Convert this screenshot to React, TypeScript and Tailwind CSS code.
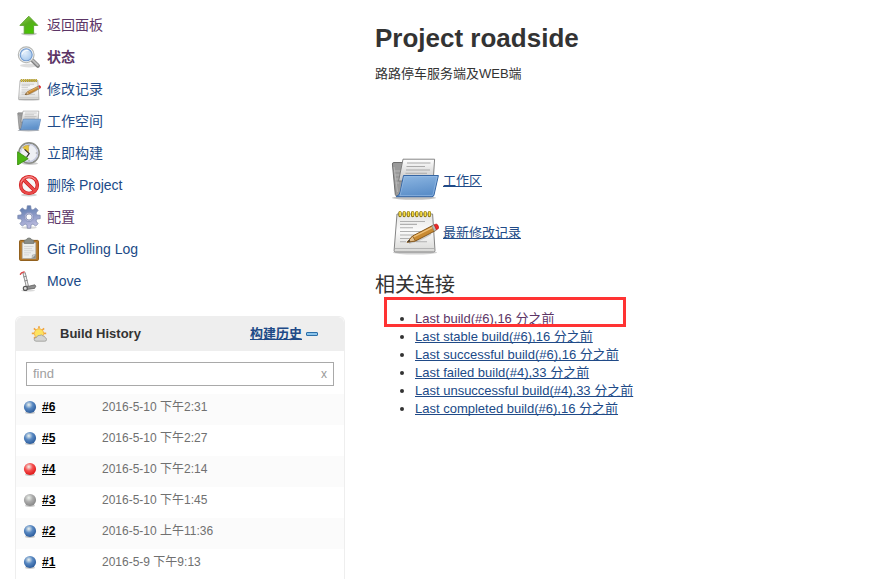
import type { ReactNode } from 'react';

const LINK = 'text-[#204a87]';
const VISITED = 'text-[#5c3566]';
const UNDERLINE = 'underline [text-decoration-skip-ink:none]';

function UpIcon() {
  return (
    <svg viewBox="0 0 24 24" className="size-6 shrink-0" aria-hidden="true">
      <defs>
        <linearGradient id="up" x1="0" y1="0" x2="0.6" y2="1">
          <stop offset="0" stopColor="#8fd04a" />
          <stop offset="0.5" stopColor="#58ac1e" />
          <stop offset="1" stopColor="#45c800" />
        </linearGradient>
      </defs>
      <ellipse cx="12" cy="20.8" rx="8" ry="1.6" fill="#000" opacity="0.22" />
      <path d="M11.8 3.2 20.8 12.4H16.6V20.6H7.2V12.4H2.9Z" fill="url(#up)" stroke="#5aa02c" strokeWidth="0.9" strokeLinejoin="round" />
    </svg>
  );
}

function SearchIcon() {
  return (
    <svg viewBox="0 0 24 24" className="size-6 shrink-0" aria-hidden="true">
      <defs>
        <radialGradient id="lens" cx="0.4" cy="0.35" r="0.7">
          <stop offset="0" stopColor="#e2eefb" />
          <stop offset="1" stopColor="#a5c7ec" />
        </radialGradient>
      </defs>
      <ellipse cx="12" cy="20.5" rx="9" ry="1.9" fill="#000" opacity="0.13" />
      <path d="M15 15 20.9 20.8" stroke="#808080" strokeWidth="4" strokeLinecap="round" />
      <path d="M15.2 14.8 20.8 20.2" stroke="#bdbdbd" strokeWidth="2" strokeLinecap="round" />
      <circle cx="9.2" cy="9.8" r="7.9" fill="#f4f4f4" stroke="#b4b6b3" strokeWidth="1.1" />
      <circle cx="9.2" cy="9.8" r="6" fill="url(#lens)" stroke="#6f99cf" strokeWidth="1.1" />
      <path d="M5.2 9.5C5.6 6.6 8.5 5 11.4 5.6" fill="none" stroke="#fff" strokeWidth="1.2" opacity="0.8" />
    </svg>
  );
}

function NotepadIcon({ className }: { className: string }) {
  return (
    <svg viewBox="0 0 48 48" className={className} aria-hidden="true">
      <defs>
        <linearGradient id="pad" x1="0" y1="0" x2="0" y2="1">
          <stop offset="0" stopColor="#e4e4e2" />
          <stop offset="0.45" stopColor="#fbfbfb" />
          <stop offset="1" stopColor="#d8d8d6" />
        </linearGradient>
      </defs>
      <ellipse cx="24" cy="45.5" rx="22" ry="2" fill="#000" opacity="0.18" />
      <path d="M6 7H41.6L44 43.5Q44 45 42.5 45H4.5Q3 45 3.1 43.5Z" fill="url(#pad)" stroke="#858585" />
      <path d="M3.6 41.5H43.5" stroke="#aaa" strokeWidth="0.8" />
      <path d="M9 14.5H34M9 17.4H26M9 20.8H22M9 24.5H32M9 28H27M9 31.5H22M9 34.8H15M25 34.8H36" stroke="#b0b0b0" strokeWidth="1.1" />
      {[9, 13.2, 17.4, 21.6, 25.8, 30, 34.2, 38.4].map((x) => (
        <g key={x}>
          <rect x={x - 1.6} y="4" width="3.2" height="6.2" rx="1.6" fill="#806a08" />
          <rect x={x - 0.8} y="4.6" width="1.8" height="4.6" rx="0.8" fill="#f5dc45" />
        </g>
      ))}
      <path d="M18 36Q28 34 40 27" fill="none" stroke="#000" strokeWidth="2" opacity="0.15" />
      <path d="M16.2 35.2 21.6 29 42 18.3 44.6 23.6 24.4 34Z" fill="#c98a32" stroke="#7c4d12" strokeWidth="0.9" strokeLinejoin="round" />
      <path d="M22 30.2 42.2 20.1" stroke="#efc077" strokeWidth="1.3" />
      <path d="M16.2 35.2 21.6 29 24.4 34Z" fill="#e4c08c" stroke="#7c4d12" strokeWidth="0.7" />
      <path d="M16.2 35.2 18.4 32.7 19.4 34.5Z" fill="#333" />
      <path d="M40.8 18.8 43.2 17.7 45.5 22.9 43.2 24.2Z" fill="#b9bdb6" stroke="#777" strokeWidth="0.5" />
      <path d="M43.2 17.7 45.3 17Q47.7 17.8 47.7 21.2L45.5 22.9Z" fill="#ef2929" stroke="#b01010" strokeWidth="0.6" />
    </svg>
  );
}

function FolderIcon({ className }: { className: string }) {
  return (
    <svg viewBox="0 0 48 48" className={className} aria-hidden="true">
      <defs>
        <linearGradient id="folder" x1="0" y1="0" x2="0.3" y2="1">
          <stop offset="0" stopColor="#8fb8e3" />
          <stop offset="1" stopColor="#5c8fc9" />
        </linearGradient>
        <linearGradient id="sheet" x1="0" y1="0" x2="0" y2="1">
          <stop offset="0" stopColor="#fff" />
          <stop offset="1" stopColor="#c4c4c4" />
        </linearGradient>
      </defs>
      <ellipse cx="23" cy="42.8" rx="22" ry="2" fill="#000" opacity="0.25" />
      <path d="M1.4 9Q1.4 7.5 3 7.5H13L38 14 40 41H6Q4.6 41 4.3 39.5Z" fill="#9a9a9a" stroke="#6e6e6e" />
      <path d="M3 12 6.5 37M3 16H9M3.7 20H9M4 24H8M4.6 28H8" stroke="#bdbdbd" strokeWidth="0.8" />
      <path d="M12 4.2H43.6L42.2 26H7.6Z" fill="url(#sheet)" stroke="#777" strokeWidth="0.9" />
      <path d="M16 8H39.5M15.5 11.5H34M15 15H39M14.5 18.3H36" stroke="#aaa" strokeWidth="1.1" />
      <path d="M12.5 20.5H47.4L43 40Q42.6 41.7 41 41.7H5.2Q8.4 40.6 9.2 37Z" fill="url(#folder)" stroke="#3566a4" strokeLinejoin="round" />
      <path d="M13.4 21.6H46L42 39.6Q41.7 40.6 40.8 40.6H9Z" fill="none" stroke="#9cc0e8" strokeWidth="0.6" />
    </svg>
  );
}

function ClockIcon() {
  return (
    <svg viewBox="0 0 24 24" className="size-6 shrink-0" aria-hidden="true">
      <ellipse cx="13" cy="22.6" rx="8" ry="1.4" fill="#000" opacity="0.2" />
      <circle cx="12" cy="12" r="10.1" fill="#eef0f4" stroke="#8b8d88" strokeWidth="1.6" />
      <circle cx="12" cy="12" r="8.6" fill="none" stroke="#c7cbe0" strokeWidth="1.3" />
      <path d="M11.5 12.5 5.8 6.5Q8.2 4.2 11.6 4.3Z" fill="#e6c33c" stroke="#b8962a" strokeWidth="0.5" />
      <path d="M7.6 8.4 12.2 12.6 9.6 16.2" fill="none" stroke="#333" strokeWidth="1.2" />
      <path d="M12 3.8V5.2M20.2 12H18.8M12 20.2V18.8" stroke="#888" strokeWidth="0.9" />
      <path d="M0.6 10.8 11.2 17.7 0.6 24Z" fill="#4cb614" stroke="#3d8f12" strokeWidth="0.9" strokeLinejoin="round" />
    </svg>
  );
}

function DeleteIcon() {
  return (
    <svg viewBox="0 0 24 24" className="size-6 shrink-0" aria-hidden="true">
      <ellipse cx="12" cy="22" rx="8" ry="1.4" fill="#000" opacity="0.18" />
      <circle cx="12" cy="12" r="8.4" fill="#f6f6f6" stroke="#cc1616" strokeWidth="3.4" />
      <path d="M6 6.1 18 18" stroke="#cc1616" strokeWidth="3.6" />
      <circle cx="12" cy="12" r="8.4" fill="none" stroke="#ea4a4a" strokeWidth="2.2" />
      <path d="M5.9 6 18.1 18.1" stroke="#ea4a4a" strokeWidth="2.3" />
      <path d="M4 9.4A8.4 8.4 0 0 1 18.6 6.9" fill="none" stroke="#f79a9a" strokeWidth="1" />
    </svg>
  );
}

function GearIcon() {
  return (
    <svg viewBox="0 0 24 24" className="size-6 shrink-0" aria-hidden="true">
      <defs>
        <linearGradient id="gear" gradientUnits="userSpaceOnUse" x1="9" y1="1" x2="14" y2="23">
          <stop offset="0" stopColor="#5e7caf" />
          <stop offset="0.5" stopColor="#8f9cc8" />
          <stop offset="1" stopColor="#c3c0e2" />
        </linearGradient>
      </defs>
      <ellipse cx="12" cy="22.6" rx="8" ry="1.3" fill="#000" opacity="0.15" />
      <path
        d="M9.9 4.2 10.3 0.8H13.7L14.1 4.2 16 5 18.7 2.9 21.1 5.3 19 8 19.8 9.9 23.2 10.3V13.7L19.8 14.1 19 16 21.1 18.7 18.7 21.1 16 19 14.1 19.8 13.7 23.2H10.3L9.9 19.8 8 19 5.3 21.1 2.9 18.7 5 16 4.2 14.1 0.8 13.7V10.3L4.2 9.9 5 8 2.9 5.3 5.3 2.9 8 5Z"
        fill="url(#gear)"
        stroke="#7482ab"
        strokeWidth="0.7"
        strokeLinejoin="round"
      />
      <circle cx="12" cy="12" r="4.6" fill="#b4b8da" stroke="#8490ba" strokeWidth="0.7" />
      <circle cx="12" cy="12" r="3" fill="#fff" stroke="#7482ab" strokeWidth="0.7" />
    </svg>
  );
}

function ClipboardIcon() {
  return (
    <svg viewBox="0 0 24 24" className="size-6 shrink-0" aria-hidden="true">
      <rect x="2.6" y="3.4" width="18.8" height="20" rx="0.8" fill="#b87c2b" stroke="#8a5710" strokeWidth="1" />
      <path d="M5.2 5.6H18.8V21.6H5.2Z" fill="#eceeec" stroke="#9b9b9b" strokeWidth="0.6" />
      <path d="M7 9.5H16.5M7 11.6H15M7 13.7H16.5M7 15.8H14M7 17.9H12" stroke="#d3d3d3" strokeWidth="0.9" />
      <path d="M18.8 17.4 15 21.6H18.8Z" fill="#8b8d88" />
      <path d="M15 21.6 15.4 18 18.8 17.4Z" fill="#d5d7d3" stroke="#8b8d88" strokeWidth="0.5" />
      <path d="M7.2 6.4V4Q7.2 3 8.2 3H9.3Q9.8 1 12 1T14.7 3H15.9Q16.8 3 16.8 4V6.4Z" fill="#8b8f89" stroke="#70736e" strokeWidth="0.8" />
    </svg>
  );
}

function MoveIcon() {
  return (
    <svg viewBox="0 0 24 24" className="size-6 shrink-0" aria-hidden="true">
      <ellipse cx="11" cy="21.6" rx="7" ry="1" fill="#000" opacity="0.15" />
      <path d="M7 3.6 10.4 17.4" stroke="#8c8c8c" strokeWidth="3.2" />
      <path d="M7.2 4.4 10.2 16.6" stroke="#f1f1f1" strokeWidth="1.4" />
      <path d="M6.4 8 9.4 7.2M7.6 12 10.6 11.2" stroke="#777" strokeWidth="0.8" />
      <path d="M3.4 5.2 4.6 3.8 7.2 2.9" fill="none" stroke="#d94a4a" strokeWidth="1.4" strokeLinecap="round" />
      <path d="M9.4 17.8 17.8 15.8 18.8 17.2 17.6 19.4 10 20.4Z" fill="#8f8f8f" stroke="#555" strokeWidth="0.7" />
      <circle cx="8.3" cy="19.4" r="2" fill="#ddd" stroke="#555" strokeWidth="1.1" />
    </svg>
  );
}

function WeatherIcon() {
  return (
    <svg viewBox="0 0 16 16" className="size-4 shrink-0" aria-hidden="true">
      <g stroke="#f0a33b" strokeWidth="1.7">
        {[0, 45, 90, 135, 180, 225, 270, 315].map((angle) => (
          <path key={angle} d="M8 0.2V2.6" transform={`rotate(${angle} 8 7.4)`} />
        ))}
      </g>
      <circle cx="8" cy="7.4" r="4.6" fill="#fde35f" stroke="#f5b548" strokeWidth="1" />
      <path d="M5 15.2Q3 15 3.2 13.2T5.6 11.4Q6.4 9 8.8 9.4 10.6 8.2 12 10 13.8 9.8 14.1 11.6 15.8 12.2 15.6 13.7T13.8 15.2Z" fill="#d3d4d2" stroke="#9a9c97" strokeWidth="0.8" />
    </svg>
  );
}

const BALLS = {
  blue: { dark: '#2f5f9e', mid: '#5888c2', label: 'Success' },
  red: { dark: '#e01b1b', mid: '#f55050', label: 'Failed' },
  grey: { dark: '#8a8a8a', mid: '#adadad', label: 'Aborted' },
};

function Ball({ color }: { color: keyof typeof BALLS }) {
  const ball = BALLS[color];
  return (
    <svg viewBox="0 0 14 14" className="size-[14px] shrink-0" role="img" aria-label={ball.label}>
      <defs>
        <radialGradient id={`ball-${color}`} cx="0.4" cy="0.32" r="0.65">
          <stop offset="0" stopColor="#eef3ee" />
          <stop offset="0.5" stopColor={ball.mid} />
          <stop offset="1" stopColor={ball.dark} />
        </radialGradient>
      </defs>
      <ellipse cx="7" cy="12.8" rx="5" ry="1.1" fill="#000" opacity="0.22" />
      <circle cx="7" cy="7" r="6.1" fill={`url(#ball-${color})`} />
    </svg>
  );
}

type Task = { label: string; icon: ReactNode; style: string };

const tasks: Task[] = [
  { label: '返回面板', icon: <UpIcon />, style: VISITED },
  { label: '状态', icon: <SearchIcon />, style: 'font-bold text-[#5c3566]' },
  { label: '修改记录', icon: <NotepadIcon className="size-6 shrink-0" />, style: LINK },
  { label: '工作空间', icon: <FolderIcon className="size-6 shrink-0" />, style: LINK },
  { label: '立即构建', icon: <ClockIcon />, style: LINK },
  { label: '删除 Project', icon: <DeleteIcon />, style: LINK },
  { label: '配置', icon: <GearIcon />, style: VISITED },
  { label: 'Git Polling Log', icon: <ClipboardIcon />, style: LINK },
  { label: 'Move', icon: <MoveIcon />, style: LINK },
];

const builds: { id: string; color: keyof typeof BALLS; date: string }[] = [
  { id: '#6', color: 'blue', date: '2016-5-10 下午2:31' },
  { id: '#5', color: 'blue', date: '2016-5-10 下午2:27' },
  { id: '#4', color: 'red', date: '2016-5-10 下午2:14' },
  { id: '#3', color: 'grey', date: '2016-5-10 下午1:45' },
  { id: '#2', color: 'blue', date: '2016-5-10 上午11:36' },
  { id: '#1', color: 'blue', date: '2016-5-9 下午9:13' },
];

const permalinks = [
  { label: 'Last build(#6),16 分之前', style: VISITED },
  { label: 'Last stable build(#6),16 分之前', style: LINK },
  { label: 'Last successful build(#6),16 分之前', style: LINK },
  { label: 'Last failed build(#4),33 分之前', style: LINK },
  { label: 'Last unsuccessful build(#4),33 分之前', style: LINK },
  { label: 'Last completed build(#6),16 分之前', style: LINK },
];

function BuildHistory() {
  return (
    <section className="mt-[19px] rounded-t-md border border-b-0 border-[#eeeeee]">
      <header className="flex h-[34px] items-center rounded-t-md bg-[#eeeeee] pr-[26px] pl-[15px]">
        <WeatherIcon />
        <h2 className="ml-[13px] flex-1 font-bold">Build History</h2>
        <a href="#trend" className={`${LINK} ${UNDERLINE} font-bold`}>构建历史</a>
        <button type="button" aria-label="Collapse" className="ml-1 flex h-4 items-center">
          <span className="h-1 w-3 rounded-[1px] border border-[#2c6fa8] bg-[#8cc4ea]" />
        </button>
      </header>
      <form className="px-[10px] pt-[11px] pb-2" onSubmit={(e) => e.preventDefault()}>
        <div className="flex h-6 items-center border border-[#a9a9a9] px-[6px]">
          <input type="text" aria-label="find" placeholder="find" className="min-w-0 flex-1 outline-none placeholder:text-[#a0a0a0]" />
          <button type="reset" aria-label="clear" className="text-[12px] leading-4 text-[#999999]">x</button>
        </div>
      </form>
      <table className="w-full border-collapse">
        <tbody>
          {builds.map((build) => (
            <tr key={build.id} className="h-[31px] odd:bg-[#fbfbfb]">
              <td className="w-[86px] p-0 pb-[6px] pl-[7px]">
                <div className="flex items-center gap-[5px]">
                  <Ball color={build.color} />
                  <a href="#build" className={`${UNDERLINE} text-[12px] leading-4 font-bold text-black`}>{build.id}</a>
                </div>
              </td>
              <td className="p-0 pb-[6px] text-[12px] leading-4 text-[#707070]">{build.date}</td>
            </tr>
          ))}
        </tbody>
      </table>
    </section>
  );
}

export default function App() {
  return (
    <div className="flex max-h-screen min-h-screen gap-[30px] overflow-hidden bg-white pr-4 pl-[15px] font-['Liberation_Sans','Noto_Sans_CJK_SC',sans-serif] text-[13px] leading-[18px] text-[#333333]">
      <aside className="w-[330px] shrink-0 pt-[9px]">
        <nav>
          <ul>
            {tasks.map((task) => (
              <li key={task.label} className="h-8 pl-[2px]">
                <a href="#task" className={`${task.style} flex h-8 items-center gap-[6px] text-[14px]`}>
                  {task.icon}
                  {task.label}
                </a>
              </li>
            ))}
          </ul>
        </nav>
        <BuildHistory />
      </aside>
      <main className="min-w-0 flex-1 pt-[22px]">
        <h1 className="text-[26px] leading-8 font-bold">Project roadside</h1>
        <p className="mt-[11px]">路路停车服务端及WEB端</p>
        <ul className="mt-[72px] flex flex-col gap-1 pl-4">
          <li className="flex items-center gap-1">
            <FolderIcon className="size-12 shrink-0" />
            <a href="#workspace" className={`${LINK} ${UNDERLINE} pt-1`}>工作区</a>
          </li>
          <li className="flex items-center gap-1">
            <NotepadIcon className="size-12 shrink-0" />
            <a href="#changes" className={`${LINK} ${UNDERLINE} pt-1`}>最新修改记录</a>
          </li>
        </ul>
        <h2 className="mt-4 text-[20px] leading-7">相关连接</h2>
        <div className="relative mt-[11px]">
          <ul className="list-disc pl-10">
            {permalinks.map((item) => (
              <li key={item.label}>
                <a href="#permalink" className={`${item.style} ${UNDERLINE}`}>{item.label}</a>
              </li>
            ))}
          </ul>
          <div className="pointer-events-none absolute -top-[13px] left-[9px] h-[30px] w-[242px] border-3 border-[#ff3333]" />
        </div>
      </main>
    </div>
  );
}
